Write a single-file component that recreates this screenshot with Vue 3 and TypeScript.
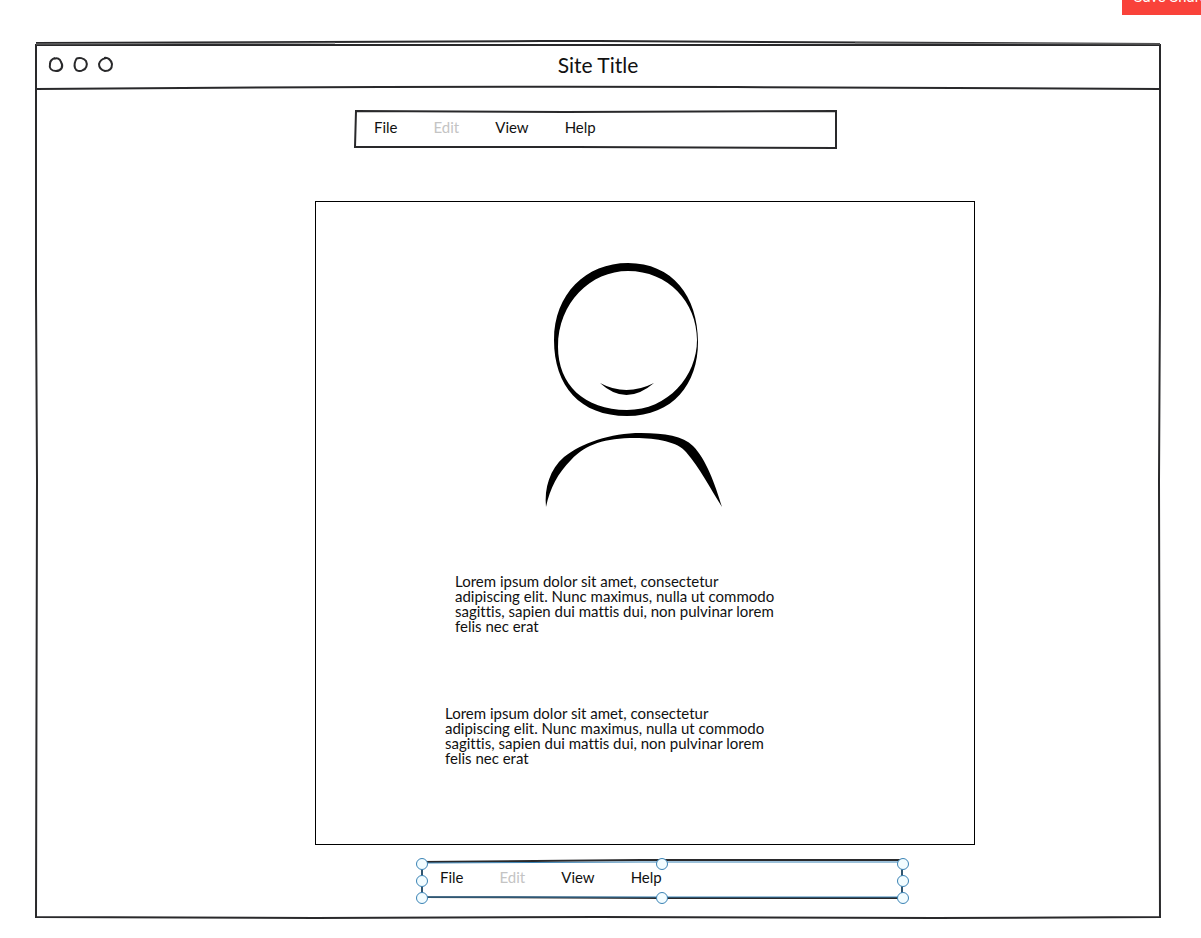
<script setup lang="ts">
interface MenuEntry { label: string; disabled?: boolean }
const menu: MenuEntry[] = [
  { label: 'File' },
  { label: 'Edit', disabled: true },
  { label: 'View' },
  { label: 'Help' },
]
const loremLines: string[] = [
  'Lorem ipsum dolor sit amet, consectetur',
  'adipiscing elit. Nunc maximus, nulla ut commodo',
  'sagittis, sapien dui mattis dui, non pulvinar lorem',
  'felis nec erat',
]
const handles: string[] = ['nw', 'n', 'ne', 'w', 'e', 'sw', 's', 'se']
</script>

<template>
  <div class="page">
    <button class="save" type="button">Save Shared</button>
    <main class="window">
      <svg class="sketch" viewBox="0 0 1126 880" preserveAspectRatio="none" aria-hidden="true">
        <path d="M1 5 L563 5 L1125 5 L1125 250 L1124 440 L1125 877 L900 878 L563 877 L280 878 L1 877 L2 440 L1 250 Z" />
        <path d="M1 3 C250 2 400 1 563 1 S900 2 1125 4" />
        <path class="faint" d="M1 4 L300 3 M820 3 L1125 4" />
      </svg>
      <header class="titlebar">
        <svg class="dots" viewBox="0 0 68 18" aria-hidden="true">
          <path d="M6 3 C9 1 12 3 13 6 C16 11 13 15 8 15 C3 15 1 12 2 8 C2 5 4 3 7 2" />
          <path d="M28 3 C31 1 36 2 38 5 C40 9 38 13 35 14 C32 16 28 15 27 12 C26 9 27 5 29 2" />
          <path d="M56 2 C60 1 63 4 64 8 C64 13 61 15 57 15 C53 14 51 11 51 8 C52 4 54 3 58 2" />
        </svg>
        <h1>Site Title</h1>
        <svg class="rule" viewBox="0 0 1126 6" preserveAspectRatio="none" aria-hidden="true">
          <path d="M1 5 Q350 2 700 3 L1125 5" />
        </svg>
      </header>

      <nav class="menu top" aria-label="Main">
        <svg class="sketch" viewBox="0 0 482 38" preserveAspectRatio="none" aria-hidden="true">
          <path d="M1 1 L210 2 L481 1 L481 38 L220 37 L0 37 Z" />
        </svg>
        <button v-for="m in menu" :key="m.label" type="button" :disabled="m.disabled">{{ m.label }}</button>
      </nav>

      <section class="panel">
        <svg class="avatar" viewBox="0 0 180 248" role="img" aria-label="Person">
          <path fill-rule="evenodd" d="M84 1 C128 1 154 34 154 80 C154 122 129 154 83 154 C36 154 10 124 10 78 C10 32 42 1 84 1 Z M84 9 C47 9 14 40 14 85 C14 122 40 148 83 148 C124 148 153 114 153 78 C153 40 124 9 84 9 Z" />
          <path d="M56 121 Q82 135 110 121 Q82 145 56 121 Z" />
          <path d="M2 245 C0 226 6 207 20 195 C38 181 66 171 97 171 C121 171 139 174 149 184 C162 197 171 222 178 245 C166 226 156 206 142 190 C134 180 113 176 91 176 C61 176 42 182 27 198 C14 211 6 226 2 245 Z" />
        </svg>
        <p class="copy first"><span v-for="l in loremLines" :key="l">{{ l }} </span></p>
        <p class="copy second"><span v-for="l in loremLines" :key="l">{{ l }} </span></p>
      </section>

      <nav class="menu bottom" aria-label="Footer">
        <svg class="sketch" viewBox="0 0 482 38" preserveAspectRatio="none" aria-hidden="true">
          <path d="M1 2 L220 0 L481 0 L481 38 L240 38 L1 37 Z" />
          <path class="selection" d="M1 3 L220 2 L481 2 L481 37 L1 37 Z" />
        </svg>
        <button v-for="m in menu" :key="m.label" type="button" :disabled="m.disabled">{{ m.label }}</button>
        <i v-for="h in handles" :key="h" class="handle" :class="h"></i>
      </nav>
    </main>
  </div>
</template>

<style>
body { margin: 0; background: #fff; }
</style>

<style scoped>
* { box-sizing: border-box; }
.page {
  position: relative;
  overflow: hidden;
  padding: 40px 40px 18px 35px;
  color: #111;
  font-family: Lato, "Open Sans", sans-serif;
  font-size: 15px;
  font-variant-ligatures: none;
}
.save {
  position: absolute;
  top: -21px;
  right: -27px;
  height: 36px;
  padding: 0 12px;
  border: 0;
  background: #f9423a;
  color: #fff;
  font: 15px/36px Roboto, sans-serif;
  white-space: nowrap;
}
.window {
  position: relative;
  display: flex;
  flex-direction: column;
  align-items: center;
  padding-bottom: 22px;
}
.sketch {
  position: absolute;
  inset: 0;
  width: 100%;
  height: 100%;
  overflow: visible;
  pointer-events: none;
}
.sketch path, .rule path, .dots path {
  fill: none;
  stroke: #29292b;
  stroke-width: 2;
  vector-effect: non-scaling-stroke;
}
.sketch .faint { stroke: #777; stroke-width: 1; }
.sketch .selection { stroke: #3b83b5; stroke-width: 1; }
.titlebar {
  position: relative;
  display: grid;
  grid-template-columns: 81px 1fr 81px;
  align-items: center;
  width: 100%;
  height: 50px;
}
.dots { width: 68px; height: 18px; margin-left: 13px; }
.rule { position: absolute; left: 0; bottom: 0; width: 100%; height: 6px; }
h1 { margin: 0; font-size: 21px; font-weight: 400; line-height: 24px; text-align: center; }
.menu {
  position: relative;
  display: flex;
  align-items: center;
  gap: 36px;
  width: 100%;
  max-width: 482px;
  height: 38px;
  padding: 0 19px 4px;
}
.menu button {
  padding: 0;
  border: 0;
  background: none;
  color: #111;
  font: inherit;
  line-height: 20px;
}
.menu button:disabled { color: #c4c4c4; }
.top { margin: 20px 4px 0 0; }
.bottom { margin: 15px 0 0 128px; }
.panel {
  width: 100%;
  max-width: 660px;
  margin: 53px 0 0 94px;
  padding: 60px 20px 78px;
  border: 1px solid #000;
}
.avatar { display: block; width: 180px; height: 248px; margin-left: 208px; fill: #000; }
.copy { margin: 0; line-height: 15px; white-space: nowrap; }
.copy span { display: block; }
.first { margin: 64px 0 0 119px; }
.second { margin: 72px 0 0 109px; }
.handle {
  position: absolute;
  width: 12px;
  height: 12px;
  margin: -6px;
  border: 1px solid #3b83b5;
  border-radius: 50%;
  background: #f2fcff;
}
.nw, .n, .ne { top: 4px; }
.w, .e { top: 21px; }
.sw, .s, .se { top: 38px; }
.nw, .w, .sw { left: 1px; }
.n, .s { left: 50%; }
.ne, .e, .se { left: 100%; }
</style>
